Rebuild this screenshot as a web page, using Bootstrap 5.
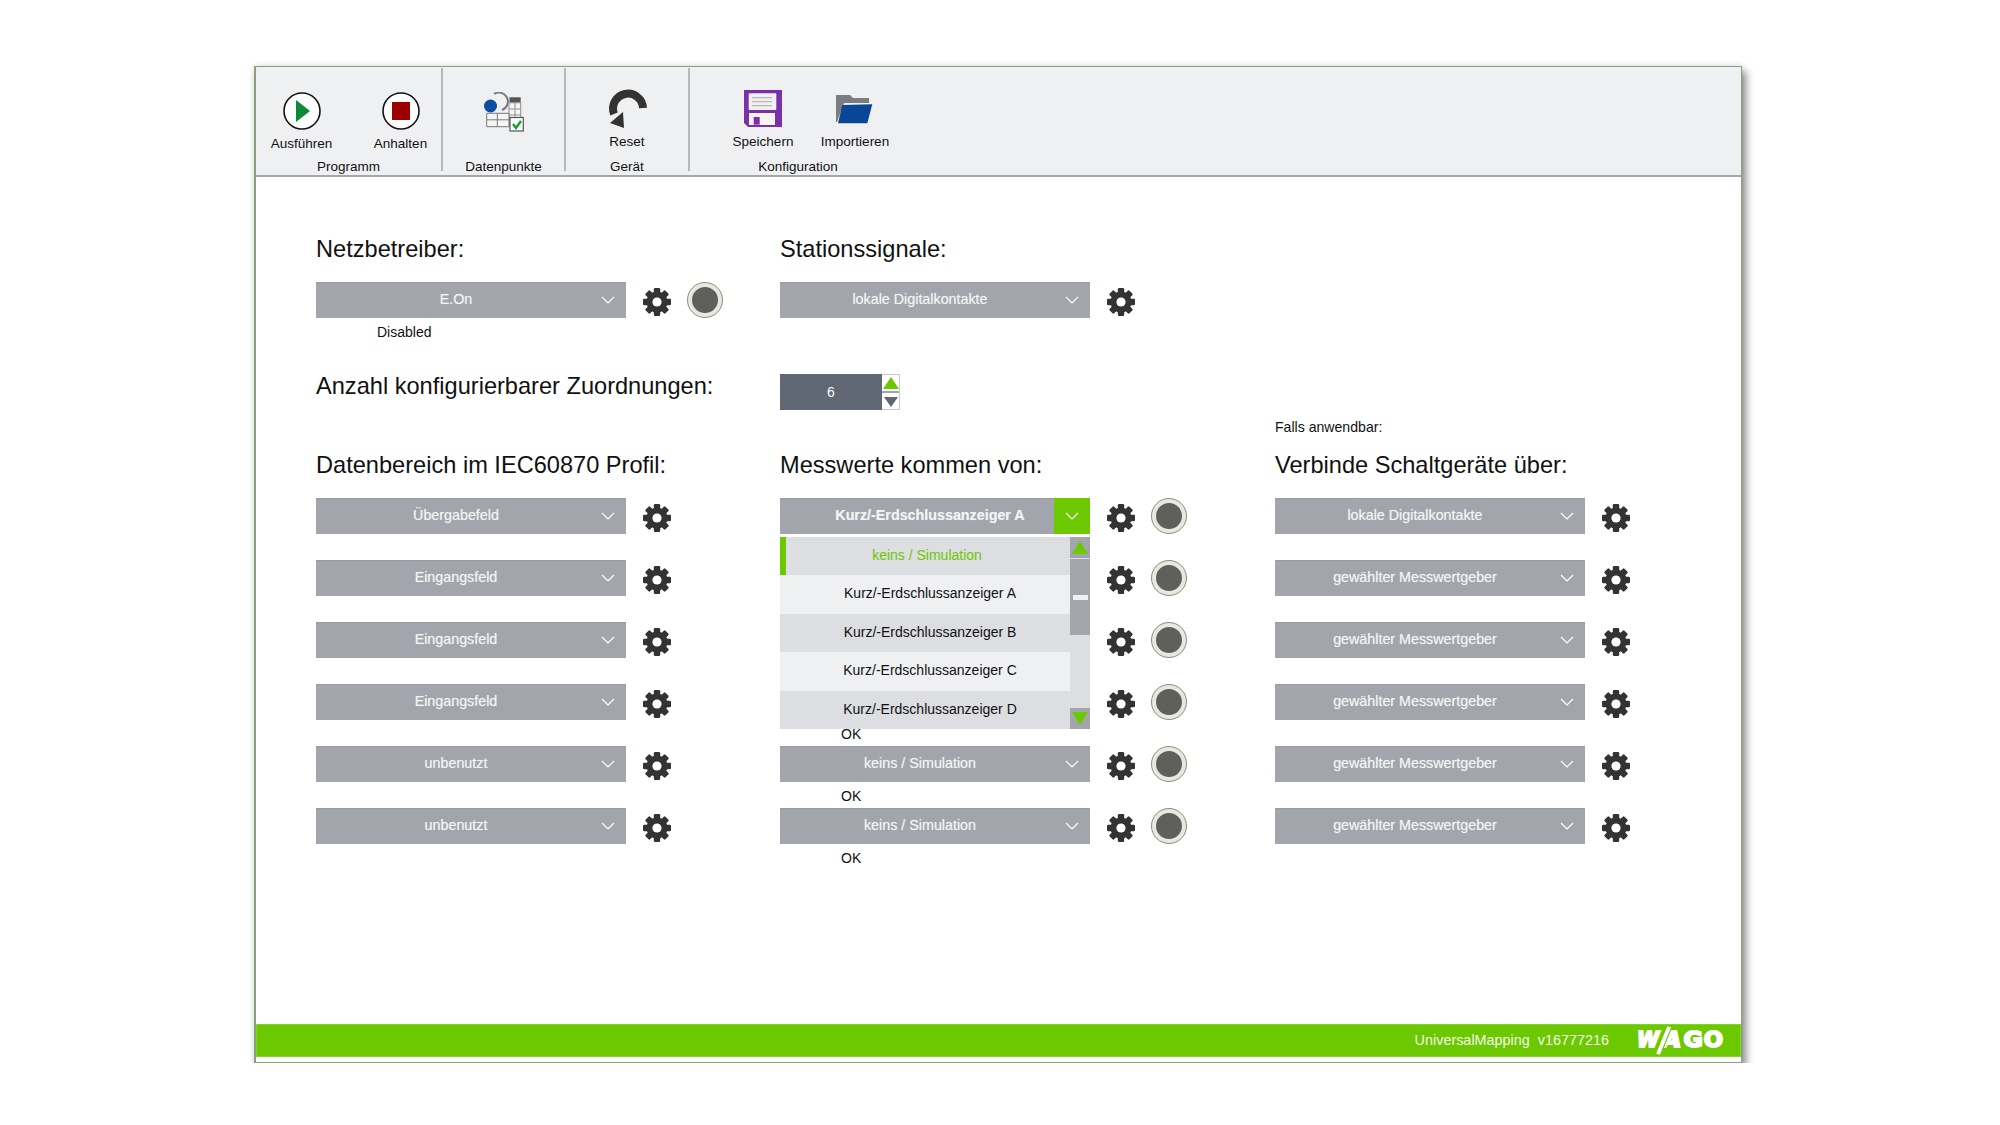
<!DOCTYPE html>
<html lang="de">
<head>
  <meta charset="UTF-8" />
  <title>UniversalMapping</title>
  <link href="https://cdn.jsdelivr.net/npm/bootstrap@5.3.0/dist/css/bootstrap.min.css" rel="stylesheet">
  <style>
    body {
      background: #fff;
      font-family: "Liberation Sans", Arial, sans-serif;
      color: #111;
      padding: 66px 0 0 254px;
      margin: 0;
    }
    .app-window {
      width: 1488px;
      height: 997px;
      background: #fff;
      border: 1px solid #8aa07c;
      border-left-width: 2px;
      box-shadow: 4px 5px 8px rgba(0,0,0,.45), 0 -1px 6px rgba(0,0,0,.08);
    }
    .tool-strip {
      height: 110px;
      background: #eff0f2;
      border-bottom: 2px solid #a3a7ab;
    }
    .tool-group {
      height: 103px;
      margin-top: 1px;
      border-right: 2px solid #b4b7bb;
      font-size: 13.5px;
      line-height: 16px;
      text-align: center;
    }
    .group-1 { width: 187px; }
    .group-2 { width: 123px; }
    .group-3 { width: 124px; }
    .group-4 { width: 216px; border-right: 0; }
    .group-1 .tool-row { padding-left: 5px; }
    .group-4 .tool-row { padding-left: 22px; }
    .tool-btn { width: 99px; flex: none; }
    .group-4 .tool-btn { width: 92px; }
    .tool-img { height: 66px; display: flex; align-items: flex-end; justify-content: center; }
    .group-1 .tool-img { height: 68px; padding-bottom: 6px; }
    .img-reset { padding-bottom: 4px; }
    .img-save { padding-bottom: 7px; }
    .img-folder { padding-bottom: 10px; }
    .img-daten { padding: 24px 0 0 5px; }
    .tool-caption { height: 20px; line-height: 20px; margin-bottom: -6px; }

    .app-body { padding: 55px 0 0 60px; }
    .grid-row {
      display: grid;
      grid-template-columns: 464px 495px 1fr;
    }
    .big-label {
      font-size: 23.6px;
      line-height: 34px;
      height: 34px;
      margin: 0 0 16px;
      font-weight: 400;
      white-space: nowrap;
    }
    .anzahl-row { margin-top: 30px; height: 36px; }
    .anzahl-row .big-label { margin-top: -5px; }
    .grid-row + .grid-row + .grid-row { margin-top: 7px; }
    .hint-line { height: 20px; font-size: 14.1px; line-height: 20px; margin-bottom: 11px; }
    .hint-line + .big-label { margin-bottom: 16px; }
    .ctrl-row { height: 36px; }
    .combo {
      position: relative;
      flex: none;
      width: 310px;
      height: 36px;
      padding: 0 30px 4px 0;
      background: #a2a5ac;
      border: 0;
      border-top: 1px solid #979aa1;
      border-radius: 0;
      color: #f4f4f4;
      font-size: 14.3px;
      line-height: 20px;
      text-align: center;
      text-shadow: 0 0 1px rgba(255,255,255,.5);
    }
    .combo-open { font-weight: 700; padding-right: 10px; font-size: 14.3px; }
    .combo-arrow {
      position: absolute;
      top: -1px;
      right: 0;
      width: 36px;
      height: 36px;
      display: flex;
      align-items: center;
      justify-content: center;
      color: #fff;
    }
    .combo-open .combo-arrow { background: #6cc800; }
    .combo-blank { flex: none; width: 310px; height: 36px; }
    .gear-icon { width: 30px; height: 30px; margin: 3px 0 0 16px; flex: none; }
    .led {
      width: 36px;
      height: 36px;
      margin-left: 15px;
      flex: none;
      border-radius: 50%;
      background: #5f5f5b;
      border: 5px solid #e8e7e2;
      outline: 1px solid #8b9478;
      outline-offset: -1px;
    }
    .status-line { height: 26px; padding-left: 61px; font-size: 14px; line-height: 28px; }
    .spin-box { width: 120px; height: 36px; }
    .spin-value {
      width: 102px;
      background: #5f6874;
      color: #fff;
      text-align: center;
      font-size: 14px;
      line-height: 36px;
    }
    .spin-btns { width: 18px; border: 1px solid #c9cbce; border-left: 0; }
    .spin-btns > div { height: 17px; }
    .spin-btns > div:first-child { border-bottom: 2px solid #a2a5ac; height: 18px; }

    .pop-list {
      position: absolute;
      z-index: 5;
      top: 39px;
      left: 0;
      width: 310px;
      height: 192px;
      background: #dcdee1;
    }
    .pop-items { width: 290px; }
    .pop-item { height: 38.4px; line-height: 37px; text-align: center; font-size: 14px; color: #111; padding-left: 10px; }
    .pop-item:nth-child(odd) { background: #dcdee1; }
    .pop-item:nth-child(even) { background: #eff0f2; }
    .pop-item.is-current { color: #6cc800; border-left: 6px solid #6cc800; padding: 0 2px 0 0; }
    .pop-scroll { width: 20px; height: 192px; }
    .scroll-btn { height: 21px; background: #a2a5ac; display: flex; align-items: center; justify-content: center; }
    .scroll-thumb {
      height: 76px;
      margin-top: 1px;
      background: #a2a5ac;
      display: flex;
      align-items: center;
      justify-content: center;
    }
    .scroll-thumb span { width: 15px; height: 5px; background: #eff0f2; display: block; }
    .scroll-gap { height: 73px; }

    .app-foot {
      height: 33px;
      margin-top: auto;
      margin-bottom: 5px;
      background: #6cc800;
      border: 1px solid #84d428;
      color: #f2fbe6;
      font-size: 14.4px;
      padding-right: 16px;
    }
    .foot-text { margin-right: 28px; }
  </style>
</head>
<body>

<svg width="0" height="0" class="position-absolute">
  <symbol id="gear" viewBox="-15 -15 30 30">
    <g fill="#333">
      <rect x="-3.2" y="-14" width="6.4" height="28" rx="1.2"/>
      <rect x="-3.2" y="-14" width="6.4" height="28" rx="1.2" transform="rotate(45)"/>
      <rect x="-3.2" y="-14" width="6.4" height="28" rx="1.2" transform="rotate(90)"/>
      <rect x="-3.2" y="-14" width="6.4" height="28" rx="1.2" transform="rotate(135)"/>
      <circle r="10.5"/>
    </g>
    <circle r="4.6" fill="#fff"/>
  </symbol>
  <symbol id="chev" viewBox="0 0 14 8">
    <path d="M1 1l6 6 6-6" fill="none" stroke="currentColor" stroke-width="1.2"/>
  </symbol>
</svg>

<div class="app-window d-flex flex-column">

  <!-- Toolbar -->
  <div class="tool-strip d-flex">
    <div class="tool-group group-1 d-flex flex-column">
      <div class="tool-row d-flex justify-content-center flex-grow-1">
        <div class="tool-btn">
          <div class="tool-img">
            <svg width="38" height="38" viewBox="0 0 38 38"><circle cx="19" cy="19" r="18" fill="#fff" stroke="#111" stroke-width="1.6"/><path d="M13 8l14 11-14 11z" fill="#0c8a36"/></svg>
          </div>
          <div>Ausführen</div>
        </div>
        <div class="tool-btn">
          <div class="tool-img">
            <svg width="38" height="38" viewBox="0 0 38 38"><circle cx="19" cy="19" r="18" fill="#fff" stroke="#111" stroke-width="1.6"/><rect x="10" y="10" width="18" height="18" fill="#9c0000"/></svg>
          </div>
          <div>Anhalten</div>
        </div>
      </div>
      <div class="tool-caption">Programm</div>
    </div>

    <div class="tool-group group-2 d-flex flex-column">
      <div class="img-daten flex-grow-1 d-flex justify-content-center">
        <svg width="44" height="42" viewBox="0 0 44 42">
          <path d="M10 2A9 9 0 1 1 18 18" fill="none" stroke="#77797c" stroke-width="2"/>
          <rect x="25.500" y="5.300" width="11.200" height="5.500" fill="#555"/>
          <path d="M25 10.800h11.700V33H25zM25 17h11.700M25 23h11.700M31 11v22" fill="#f5f5f5" stroke="#8d9094"/>
          <path d="M2.700 21.300H25v13.400H2.700zM2.700 27.800H25M13.300 21.300v13.400" fill="#f5f5f5" stroke="#77797c"/>
          <circle cx="6.500" cy="14" r="6.500" fill="#0b4ea2"/>
          <rect x="26" y="25.500" width="13.300" height="13.500" fill="#fff" stroke="#555" stroke-width="1.200"/>
          <path d="M29 32l3 4 5-7" fill="none" stroke="#0fa32e" stroke-width="2.400"/>
        </svg>
      </div>
      <div class="tool-caption">Datenpunkte</div>
    </div>

    <div class="tool-group group-3 d-flex flex-column">
      <div class="flex-grow-1">
        <div class="tool-img img-reset">
          <svg width="42" height="42" viewBox="0 0 42 42">
            <path d="M37 20A15 15 0 1 0 8 26" fill="none" stroke="#333" stroke-width="8"/>
            <path d="M17 24l1 16-14-5z" fill="#333"/>
          </svg>
        </div>
        <div>Reset</div>
      </div>
      <div class="tool-caption">Gerät</div>
    </div>

    <div class="tool-group group-4 d-flex flex-column">
      <div class="tool-row d-flex justify-content-center flex-grow-1">
        <div class="tool-btn">
          <div class="tool-img img-save">
            <svg width="38" height="37" viewBox="0 0 38 37">
              <path d="M0 0h38v37H4l-4-4z" fill="#7b2fa8"/>
              <rect x="4.700" y="3.300" width="27.600" height="16.700" rx="1" fill="#f1f1f1"/>
              <path d="M8 7.700h20M8 11.700h20M8 15.700h20" stroke="#b9b9b9" stroke-width="1.200"/>
              <rect x="5" y="23" width="26" height="12" fill="#f4f4f4"/>
              <rect x="9.700" y="27" width="6" height="7.700" fill="#7b2fa8"/>
            </svg>
          </div>
          <div>Speichern</div>
        </div>
        <div class="tool-btn">
          <div class="tool-img img-folder">
            <svg width="38" height="30" viewBox="0 0 38 30">
              <path d="M0 1h14l3 3h16v5H8L1 28H0z" fill="#7b7d80"/>
              <path d="M6.300 11l30-.7-5 19H2z" fill="#0a4696"/>
            </svg>
          </div>
          <div>Importieren</div>
        </div>
      </div>
      <div class="tool-caption">Konfiguration</div>
    </div>
  </div>

  <!-- Inhalt -->
  <div class="app-body">
    <div class="grid-row">
      <div>
        <h2 class="big-label">Netzbetreiber:</h2>
        <div id="netz"></div>
      </div>
      <div>
        <h2 class="big-label">Stationssignale:</h2>
        <div id="station"></div>
      </div>
    </div>

    <div class="grid-row anzahl-row">
      <h2 class="big-label">Anzahl konfigurierbarer Zuordnungen:</h2>
      <div class="spin-box d-flex">
        <div class="spin-value">6</div>
        <div class="spin-btns">
          <div class="d-flex align-items-center justify-content-center">
            <svg width="16" height="12" viewBox="0 0 16 12"><path d="M8 0l8 12H0z" fill="#6cc800"/></svg>
          </div>
          <div class="d-flex align-items-center justify-content-center">
            <svg width="14" height="10" viewBox="0 0 14 10"><path d="M7 10L14 0H0z" fill="#5f6874"/></svg>
          </div>
        </div>
      </div>
    </div>

    <div class="grid-row">
      <div>
        <div class="hint-line"></div>
        <h2 class="big-label">Datenbereich im IEC60870 Profil:</h2>
        <div id="spalte1"></div>
      </div>
      <div>
        <div class="hint-line"></div>
        <h2 class="big-label">Messwerte kommen von:</h2>
        <div id="spalte2" class="position-relative"></div>
      </div>
      <div>
        <div class="hint-line">Falls anwendbar:</div>
        <h2 class="big-label">Verbinde Schaltgeräte über:</h2>
        <div id="spalte3"></div>
      </div>
    </div>
  </div>

  <!-- Fusszeile -->
  <div class="app-foot d-flex align-items-center justify-content-end">
    <span class="foot-text">UniversalMapping&nbsp; v16777216</span>
    <svg width="87" height="32" viewBox="0 0 90 32" overflow="visible">
      <g font-family="DejaVu Sans" font-weight="700" font-size="22" fill="#fff" stroke="#fff" stroke-width="2">
        <text x="0" y="22" font-style="italic" textLength="23" lengthAdjust="spacingAndGlyphs">W</text>
        <text x="26" y="22" font-style="italic" textLength="20" lengthAdjust="spacingAndGlyphs">A</text>
        <text x="48" y="22" textLength="20" lengthAdjust="spacingAndGlyphs">G</text>
        <text x="69" y="22" textLength="20" lengthAdjust="spacingAndGlyphs">O</text>
      </g>
      <path d="M31 0l5 1.500-12 29.500-5-1.500z" fill="#fff" stroke="#6cc800" stroke-width="1.200"/>
    </svg>
  </div>
</div>

<script src="https://cdn.jsdelivr.net/npm/bootstrap@5.3.0/dist/js/bootstrap.bundle.min.js"></script>
<script>
function zeile(text, opt) {
  opt = opt || {};
  // Zeilen unter der offenen Liste bekommen keinen eigenen Button
  const feld = text === null
    ? '<div class="combo-blank"></div>'
    : `<button type="button" class="combo ${opt.offen ? "combo-open" : ""}">${text}
        <span class="combo-arrow"><svg width="14" height="8"><use href="#chev"/></svg></span>
      </button>`;
  return `
    <div class="ctrl-row d-flex align-items-center">
      ${feld}
      <svg class="gear-icon"><use href="#gear"/></svg>
      ${opt.led ? '<span class="led"></span>' : ""}
    </div>
    <div class="status-line">${opt.status || ""}</div>`;
}

document.getElementById("netz").innerHTML = zeile("E.On", { led: true, status: "Disabled" });
document.getElementById("station").innerHTML = zeile("lokale Digitalkontakte");

const daten = ["Übergabefeld", "Eingangsfeld", "Eingangsfeld", "Eingangsfeld", "unbenutzt", "unbenutzt"];
document.getElementById("spalte1").innerHTML = daten.map(t => zeile(t)).join("");

const mess = [
  ["Kurz/-Erdschlussanzeiger A", ""],
  [null, ""],
  [null, ""],
  [null, "OK"],
  ["keins / Simulation", "OK"],
  ["keins / Simulation", "OK"]
];
document.getElementById("spalte2").innerHTML = mess.map((m, i) => zeile(m[0], { led: true, offen: i === 0, status: m[1] })).join("") + `
  <div class="pop-list d-flex">
    <div class="pop-items">
      <div class="pop-item is-current">keins / Simulation</div>
      <div class="pop-item">Kurz/-Erdschlussanzeiger A</div>
      <div class="pop-item">Kurz/-Erdschlussanzeiger B</div>
      <div class="pop-item">Kurz/-Erdschlussanzeiger C</div>
      <div class="pop-item">Kurz/-Erdschlussanzeiger D</div>
    </div>
    <div class="pop-scroll">
      <div class="scroll-btn"><svg width="16" height="13" viewBox="0 0 16 13"><path d="M8 0l8 13H0z" fill="#6cc800"/></svg></div>
      <div class="scroll-thumb"><span></span></div>
      <div class="scroll-gap"></div>
      <div class="scroll-btn"><svg width="16" height="13" viewBox="0 0 16 13"><path d="M8 13L16 0H0z" fill="#6cc800"/></svg></div>
    </div>
  </div>`;

const schalt = ["lokale Digitalkontakte", "gewählter Messwertgeber", "gewählter Messwertgeber", "gewählter Messwertgeber", "gewählter Messwertgeber", "gewählter Messwertgeber"];
document.getElementById("spalte3").innerHTML = schalt.map(t => zeile(t)).join("");
</script>

</body>
</html>
